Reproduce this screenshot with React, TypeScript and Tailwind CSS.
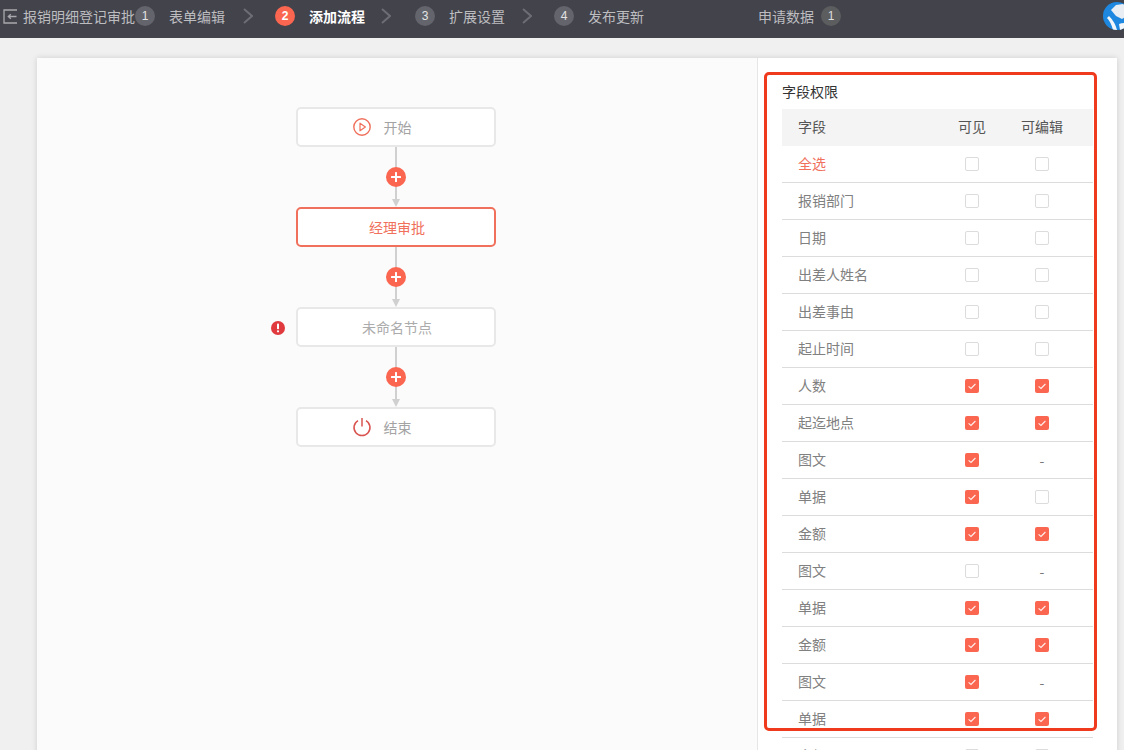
import React from "react";

const FONT = "font-['Noto_Sans_CJK_SC','Noto_Sans',sans-serif]";

type Perm = boolean | null;
const rows: { name: string; v: boolean; e: Perm }[] = [
  { name: "报销部门", v: false, e: false },
  { name: "日期", v: false, e: false },
  { name: "出差人姓名", v: false, e: false },
  { name: "出差事由", v: false, e: false },
  { name: "起止时间", v: false, e: false },
  { name: "人数", v: true, e: true },
  { name: "起迄地点", v: true, e: true },
  { name: "图文", v: true, e: null },
  { name: "单据", v: true, e: false },
  { name: "金额", v: true, e: true },
  { name: "图文", v: false, e: null },
  { name: "单据", v: true, e: true },
  { name: "金额", v: true, e: true },
  { name: "图文", v: true, e: null },
  { name: "单据", v: true, e: true },
  { name: "金额", v: false, e: false },
];

function Check({ on }: { on: Perm }) {
  if (on === null) return <span className="text-[14px] text-[#777] leading-none">-</span>;
  if (on)
    return (
      <span className="flex h-[14px] w-[14px] items-center justify-center rounded-[2px] bg-[#fb6650]">
        <svg width="10" height="10" viewBox="0 0 10 10" fill="none">
          <path d="M1.6 5.4 L4 7.4 L8.4 3" stroke="#fff2ef" strokeWidth="1.1" />
        </svg>
      </span>
    );
  return <span className="h-[14px] w-[14px] rounded-[2px] border border-[#dcdcdc] bg-white" />;
}

function Step({ n, label, active }: { n: string; label: string; active?: boolean }) {
  return (
    <div className="flex items-center">
      <span
        className={`flex h-5 w-5 items-center justify-center rounded-full font-['Liberation_Sans',sans-serif] text-[12px] ${
          active ? "bg-[#fb6650] font-bold text-white" : "bg-[#63646c] text-[#e4e4e4]"
        }`}
      >
        {n}
      </span>
      <span className={`ml-[14px] text-[14px] ${active ? "font-bold text-white" : "text-[#bdbdc0]"}`}>{label}</span>
    </div>
  );
}

function Chevron({ className }: { className: string }) {
  return (
    <svg className={className} width="10" height="16" viewBox="0 0 10 16" fill="none">
      <path d="M1 1 L9 8 L1 15" stroke="#6d6e75" strokeWidth="2" />
    </svg>
  );
}

function Connector() {
  return (
    <svg width="20" height="60" viewBox="0 0 20 60" className="block">
      <rect x="9" y="0" width="2" height="53" fill="#d0d0d0" />
      <path d="M6 52 H14 L10 60 Z" fill="#d0d0d0" />
      <circle cx="10" cy="30" r="10" fill="#fb6650" />
      <rect x="5" y="29" width="10" height="2" rx="0.5" fill="#fff" />
      <rect x="9" y="25" width="2" height="10" rx="0.5" fill="#fff" />
    </svg>
  );
}

function Node({
  children,
  active,
}: {
  children: React.ReactNode;
  active?: boolean;
}) {
  return (
    <div
      className={`relative flex h-10 w-[200px] items-center justify-center rounded-[5px] border-2 bg-white pl-[2px] text-[14px] ${
        active ? "border-[#f0705c] text-[#f0705c]" : "border-[#e8e8e8] text-[#a3a3a3]"
      }`}
    >
      {children}
    </div>
  );
}

export default function App() {
  return (
    <div className={`relative h-[750px] w-[1124px] overflow-hidden bg-[#f0f0f0] ${FONT}`}>
      <header className="flex h-[38px] items-center overflow-hidden bg-[#42434b] pb-[6px] pl-[3px]">
        <svg width="15" height="15" viewBox="0 0 15 15" fill="none" className="shrink-0">
          <path d="M14 1 H1 V14 H14" stroke="#a9a9ad" strokeWidth="1.3" />
          <path d="M13.5 7.5 H5.5 M7.8 5.2 L5.3 7.5 L7.8 9.8" stroke="#a9a9ad" strokeWidth="1.3" />
        </svg>
        <span className="ml-[5px] w-[112px] shrink-0 whitespace-nowrap text-[14px] text-[#bdbdc0]">报销明细登记审批</span>
        <div className="shrink-0"><Step n="1" label="表单编辑" /></div>
        <Chevron className="ml-[18px] shrink-0" />
        <div className="ml-[22px] shrink-0"><Step n="2" label="添加流程" active /></div>
        <Chevron className="ml-4 shrink-0" />
        <div className="ml-6 shrink-0"><Step n="3" label="扩展设置" /></div>
        <Chevron className="ml-[17px] shrink-0" />
        <div className="ml-[22px] shrink-0"><Step n="4" label="发布更新" /></div>
        <span className="ml-[114px] shrink-0 text-[14px] text-[#bdbdc0]">申请数据</span>
        <span className="ml-[7px] flex h-5 w-5 shrink-0 items-center justify-center rounded-full bg-[#5c5d5f] font-['Liberation_Sans',sans-serif] text-[12px] text-[#dedede]">1</span>
        <svg width="28" height="28" viewBox="0 0 28 28" className="ml-[262px] shrink-0 rounded-full">
          <rect width="28" height="28" fill="#1e88e0" />
          <path d="M8 8 L13 3 L20 2 L26 6 L24 14 L19 17 L13 14 Z" fill="#e8eef4" />
          <path d="M4 16 Q8 20 10 28 L14 28 Q12 20 6 14 Z" fill="#f4f7fa" />
          <path d="M16 22 Q22 20 28 22 L28 28 L17 28 Z" fill="#f4f7fa" />
        </svg>
      </header>

      <main className="relative ml-[37px] mr-[7px] mt-5 flex h-[760px] bg-white shadow-[0_0_6px_rgba(0,0,0,0.14)]">
        <section className="w-[721px] shrink-0 border-r border-[#e6e6e6] bg-[#fbfbfb] pl-[259px] pt-[49px]">
          <div className="flex w-[200px] flex-col items-center">
            <Node>
              <svg width="20" height="20" viewBox="0 0 20 20" fill="none" className="mr-3">
                <circle cx="10" cy="10" r="8.2" stroke="#f0705c" strokeWidth="1.4" />
                <path d="M8 6.2 L13.4 10 L8 13.8 Z" stroke="#f0705c" strokeWidth="1.2" strokeLinejoin="round" />
              </svg>
              <span className="mr-[31px] text-[#a3a3a3]">开始</span>
            </Node>
            <Connector />
            <Node active>经理审批</Node>
            <Connector />
            <Node>
              <span className="absolute -left-[27px] top-[12px] flex h-[14px] w-[14px] items-center justify-center rounded-full bg-[#e0393e]">
                <svg width="4" height="10" viewBox="0 0 4 10">
                  <rect x="1" y="0.5" width="2" height="5.8" rx="0.8" fill="#fff" />
                  <circle cx="2" cy="8.3" r="1.1" fill="#fff" />
                </svg>
              </span>
              <span className="text-[#ababab]">未命名节点</span>
            </Node>
            <Connector />
            <Node>
              <svg width="20" height="20" viewBox="0 0 20 20" fill="none" className="mr-3">
                <path d="M6 3.6 A8 8 0 1 0 14 3.6" stroke="#d9534f" strokeWidth="1.5" />
                <path d="M10 1 V9.5" stroke="#d9534f" strokeWidth="1.5" />
              </svg>
              <span className="mr-[31px] text-[#a3a3a3]">结束</span>
            </Node>
          </div>
        </section>

        <section className="flex-1 pl-[24px] pt-[23px]">
          <h2 className="h-[28px] text-[14px] font-normal leading-5 text-[#333]">字段权限</h2>
          <div className="w-[311px]">
            <div className="grid h-[37px] grid-cols-[139px_70px_70px] items-center bg-[#f4f4f4] pl-4 text-[14px] text-[#555]">
              <span className="pb-[2px]">字段</span>
              <span className="pb-[2px] text-center">可见</span>
              <span className="pb-[2px] text-center">可编辑</span>
            </div>
            <div className="grid h-[37px] grid-cols-[139px_70px_70px] items-center border-b border-[#dcdcdc] pl-4 text-[14px] text-[#f0705c]">
              <span className="pb-[2px]">全选</span>
              <span className="flex justify-center"><Check on={false} /></span>
              <span className="flex justify-center"><Check on={false} /></span>
            </div>
            {rows.map((r, i) => (
              <div
                key={i}
                className="grid h-[37px] grid-cols-[139px_70px_70px] items-center border-b border-[#dcdcdc] pl-4 text-[14px] text-[#808080]"
              >
                <span className="pb-[2px]">{r.name}</span>
                <span className="flex justify-center"><Check on={r.v} /></span>
                <span className="flex justify-center"><Check on={r.e} /></span>
              </div>
            ))}
          </div>
        </section>

        <div className="pointer-events-none absolute left-[727px] top-[14px] h-[659px] w-[333px] rounded-[5px] border-[3px] border-[#f03a1d]" />
      </main>
    </div>
  );
}
